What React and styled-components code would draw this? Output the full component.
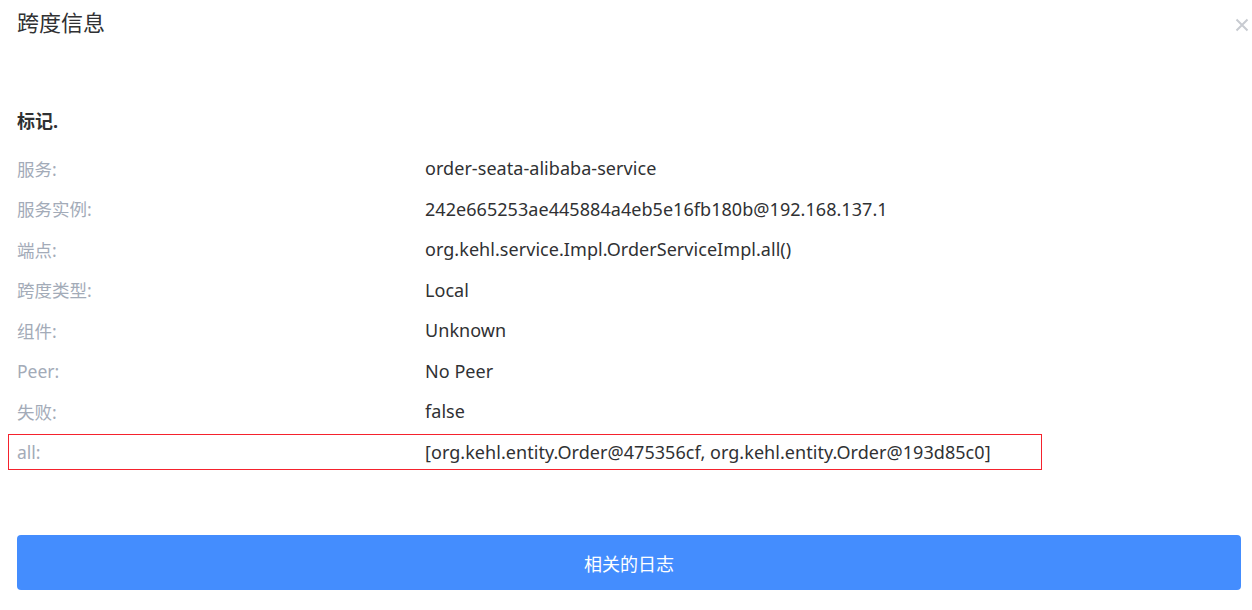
import React from "react";
import styled, { createGlobalStyle } from "styled-components";

const Global = createGlobalStyle`
  html, body { margin: 0; padding: 0; background: #fff; }
  body { font-family: "Noto Sans", "Noto Sans CJK SC", sans-serif; }
`;

const Page = styled.div`
  width: 1252px;
  height: 610px;
  box-sizing: border-box;
  padding: 0 11px 0 17px;
  overflow: hidden;
`;

const Header = styled.div`
  height: 44px;
  display: flex;
  align-items: center;
  justify-content: space-between;
`;

const Title = styled.h2`
  margin: 0;
  font-size: 22px;
  font-weight: 400;
  color: #303133;
  line-height: 44px;
`;

const Close = styled.button`
  border: 0;
  background: none;
  padding: 0;
  margin-right: -9px;
  margin-top: 6px;
  width: 16px;
  height: 16px;
  display: flex;
  align-items: center;
  justify-content: center;
  cursor: pointer;
`;

const Section = styled.div`
  margin-top: 65px;
  font-size: 18px;
  font-weight: 700;
  color: #303133;
  line-height: 24px;
`;

const List = styled.div`
  margin-top: 17px;
  display: grid;
  row-gap: 4.5px;
`;

const Row = styled.div`
  height: 36px;
  box-sizing: border-box;
  display: grid;
  grid-template-columns: 408px 1fr;
  align-items: center;
  font-size: 18px;
  ${(p) =>
    p.$marked &&
    `
    margin-left: -9px;
    width: 1034px;
    padding-left: 8px;
    border: 1px solid #f5222d;
  `}
`;

const Label = styled.span`
  color: #a3abb8;
  font-size: 17.5px;
`;

const Value = styled.span`
  color: #303133;
  white-space: nowrap;
  letter-spacing: 0.05px;
`;

const Button = styled.button`
  margin-top: 65.5px;
  width: 100%;
  height: 55px;
  border: 0;
  border-radius: 4px;
  background: #448dfe;
  color: #fff;
  font-family: "Noto Sans CJK SC", sans-serif;
  font-size: 18px;
  cursor: pointer;
`;

const rows = [
  ["服务:", "order-seata-alibaba-service"],
  ["服务实例:", "242e665253ae445884a4eb5e16fb180b@192.168.137.1"],
  ["端点:", "org.kehl.service.Impl.OrderServiceImpl.all()"],
  ["跨度类型:", "Local"],
  ["组件:", "Unknown"],
  ["Peer:", "No Peer"],
  ["失败:", "false"],
  ["all:", "[org.kehl.entity.Order@475356cf, org.kehl.entity.Order@193d85c0]", true],
];

export default function App() {
  return (
    <Page>
      <Global />
      <Header>
        <Title>跨度信息</Title>
        <Close aria-label="close">
          <svg width="14" height="14" viewBox="0 0 14 14">
            <path d="M1.5 1.5L12.5 12.5M12.5 1.5L1.5 12.5" stroke="#c8cbd1" strokeWidth="2" />
          </svg>
        </Close>
      </Header>
      <Section>标记.</Section>
      <List>
        {rows.map(([l, v, m]) => (
          <Row key={l} $marked={m}>
            <Label>{l}</Label>
            <Value>{v}</Value>
          </Row>
        ))}
      </List>
      <Button>相关的日志</Button>
    </Page>
  );
}
